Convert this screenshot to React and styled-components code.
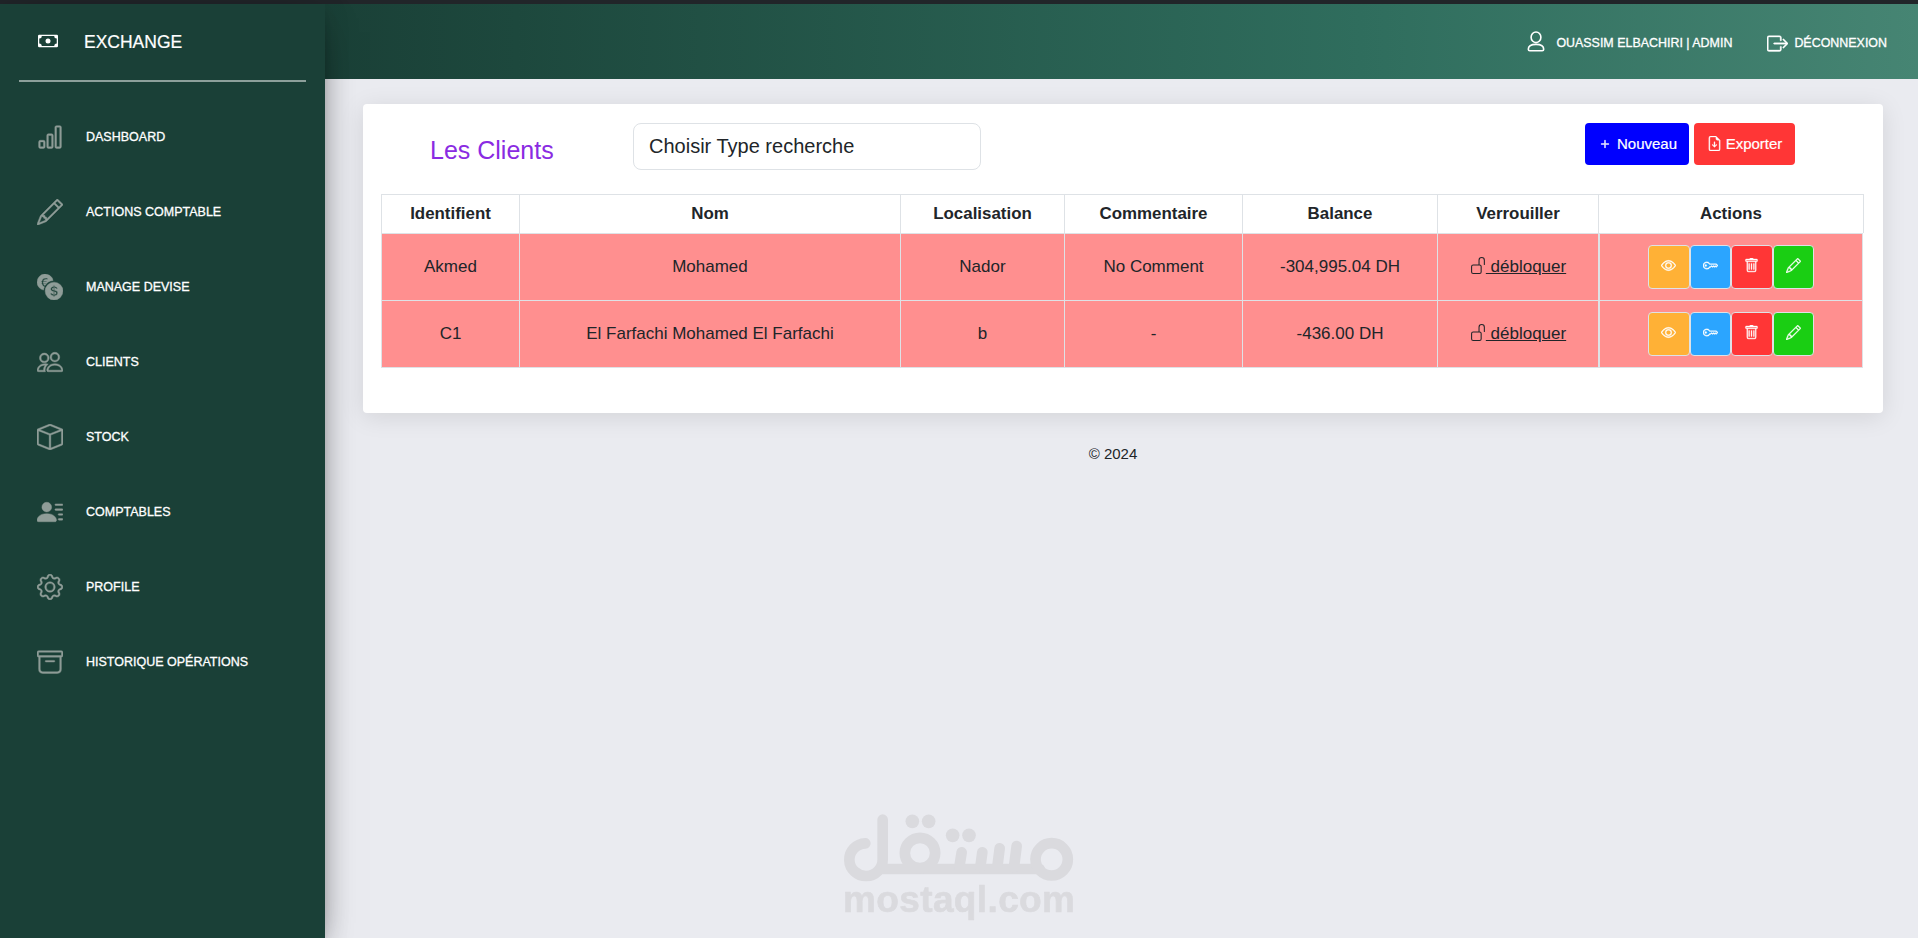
import React from 'react';
import styled, { createGlobalStyle } from 'styled-components';
import {
  BsArchive,
  BsBarChart,
  BsBox,
  BsBoxArrowRight,
  BsCash,
  BsCurrencyExchange,
  BsEye,
  BsFileEarmarkArrowDown,
  BsGear,
  BsKey,
  BsPencil,
  BsPeople,
  BsPersonLinesFill,
  BsPlus,
  BsTrash,
  BsUnlock,
} from 'react-icons/bs';

const GlobalStyle = createGlobalStyle`
  * {
    box-sizing: border-box;
  }

  body {
    margin: 0;
    background-color: #eaebf0;
    color: #212529;
    font-family: "Liberation Sans", Arial, sans-serif;
    overflow: hidden;
  }
`;

const Page = styled.div`
  display: flex;
  height: 100vh;
  border-top: 4px solid #212529;
`;

const Sidebar = styled.aside`
  position: relative;
  z-index: 2;
  width: 325px;
  flex-shrink: 0;
  background-color: #1a4037;
  color: #fff;
  box-shadow: 0 16px 38px -12px rgba(0, 0, 0, 0.56), 0 4px 25px 0 rgba(0, 0, 0, 0.12),
    0 8px 10px -5px rgba(0, 0, 0, 0.2);
`;

const Brand = styled.div`
  display: flex;
  align-items: center;
  gap: 26px;
  height: 78px;
  margin: 0 19px;
  padding: 0 0 2px 19px;
  border-bottom: 2px solid rgba(255, 255, 255, 0.5);
  font-size: 17.5px;

  span {
    padding-top: 2px;
    -webkit-text-stroke: 0.2px #fff;
  }
`;

const NavList = styled.ul`
  list-style: none;
  margin: 0;
  padding: 17px 0 0;
`;

const NavItem = styled.li`
  display: flex;
  align-items: center;
  gap: 23px;
  height: 75px;
  padding-left: 37px;
  font-size: 12.5px;
  text-transform: uppercase;
  -webkit-text-stroke: 0.3px #fff;

  svg {
    width: 26px;
    height: 26px;
    color: #8f9d98;
    stroke-width: 0.25px;
  }
`;

const NavLabel = styled.span`
  padding-top: 1px;
`;

const Main = styled.main`
  flex: 1;
  display: flex;
  flex-direction: column;
`;

const Header = styled.header`
  display: flex;
  justify-content: flex-end;
  align-items: center;
  height: 75px;
  padding: 0 31px 0 0;
  background: linear-gradient(to right, #1a4037, #1d483d 12%, #2f6d5d 65%, #468573);
  color: #fff;
  font-size: 12.45px;
  text-transform: uppercase;
  -webkit-text-stroke: 0.3px #fff;
`;

const HeaderLink = styled.span`
  display: flex;
  align-items: center;
  gap: ${(props) => props.$gap}px;
  margin-left: 35px;

  svg {
    margin-top: ${(props) => props.$drop}px;
    stroke-width: ${(props) => props.$stroke}px;
  }
`;

const HeaderLabel = styled.span`
  padding-top: 2px;
`;

const Card = styled.section`
  height: 309px;
  margin: 25px 35px 0 38px;
  padding: 19px 19px 0 18px;
  background-color: #fff;
  border-radius: 4px;
  box-shadow: 0 4px 25px rgba(0, 0, 0, 0.1);
`;

const Toolbar = styled.div`
  display: flex;
  align-items: flex-start;
  height: 71px;
  padding: 0 69px 0 49px;
`;

const Title = styled.h2`
  width: 203px;
  margin: 12px 0 0;
  color: #8a2be2;
  font-size: 25px;
  font-weight: normal;
  line-height: 30px;
`;

const SearchType = styled.div`
  width: 348px;
  height: 47px;
  margin-right: auto;
  padding: 0 15px;
  border: 1px solid #dee2e6;
  border-radius: 8px;
  font-size: 20px;
  line-height: 45px;
`;

const ToolButton = styled.button`
  display: flex;
  align-items: center;
  justify-content: center;
  gap: ${(props) => props.$gap}px;
  width: ${(props) => props.$width}px;
  height: 42px;
  margin-left: 5px;
  padding: 0 0 1px;
  border: none;
  border-radius: 4px;
  background-color: ${(props) => props.$color};
  color: #fff;
  font-family: inherit;
  font-size: 15px;
  -webkit-text-stroke: 0.2px #fff;

  svg {
    stroke-width: 0.4px;
  }
`;

const Table = styled.table`
  display: block;
  font-size: 17px;
  text-align: center;

  thead,
  tbody {
    display: block;
  }
`;

const Row = styled.tr`
  display: grid;
  grid-template-columns: 138px 381px 164px 178px 195px 161px 1fr;
`;

const HeadCell = styled.th`
  height: 39px;
  padding: 0;
  border: solid #dee2e6;
  border-width: 1px 0 0 1px;
  font-size: 16.9px;
  line-height: 38px;

  &:last-child {
    border-right-width: 1px;
  }
`;

const Cell = styled.td`
  display: flex;
  align-items: center;
  justify-content: center;
  height: 67px;
  padding: 0;
  border: solid #dee2e6;
  border-width: 1px 0 0 1px;
  background-color: #ff8f8f;

  tr:last-child > & {
    height: 68px;
    border-bottom-width: 1px;
  }
`;

const ActionsCell = styled(Cell)`
  margin-right: 1px;
  border-left-width: 2px;
  border-right-width: 1px;
`;

const Unlock = styled.a`
  display: flex;
  align-items: center;

  svg {
    margin: -3px -1px 0 0;
  }

  span {
    text-decoration: underline;
    white-space: pre;
  }
`;

const ActionButton = styled.button`
  display: flex;
  align-items: center;
  justify-content: center;
  width: 41.5px;
  height: 44px;
  padding: 0 0 3px;
  border: 1px solid #dee2e6;
  border-radius: 4px;
  background-color: ${(props) => props.$color};
  color: #fff;

  svg {
    flex-shrink: 0;
    stroke-width: 0.35px;
  }
`;

const Footer = styled.footer`
  padding: 32px 17px 0 0;
  font-size: 15px;
  line-height: 18px;
  text-align: center;
`;

// Sits over the page, like a stamp
const Watermark = styled.svg`
  position: fixed;
  left: 843px;
  top: 811px;
  z-index: 3;
  width: 233px;
  height: 110px;
  color: #dadade;
`;

const navItems = [
  { label: 'Dashboard', Icon: BsBarChart },
  { label: 'Actions comptable', Icon: BsPencil },
  { label: 'Manage devise', Icon: BsCurrencyExchange },
  { label: 'Clients', Icon: BsPeople },
  { label: 'Stock', Icon: BsBox },
  { label: 'Comptables', Icon: BsPersonLinesFill },
  { label: 'Profile', Icon: BsGear },
  { label: 'Historique opérations', Icon: BsArchive },
];

const columns = ['Identifient', 'Nom', 'Localisation', 'Commentaire', 'Balance', 'Verrouiller', 'Actions'];

const clients = [
  { id: 'Akmed', nom: 'Mohamed', ville: 'Nador', commentaire: 'No Comment', balance: '-304,995.04 DH' },
  { id: 'C1', nom: 'El Farfachi Mohamed El Farfachi', ville: 'b', commentaire: '-', balance: '-436.00 DH' },
];

const actions = [
  { name: 'voir', color: '#ffb136', Icon: BsEye },
  { name: 'clé', color: '#2ba5ff', Icon: BsKey },
  { name: 'supprimer', color: '#ff3636', Icon: BsTrash },
  { name: 'modifier', color: '#1ace13', Icon: BsPencil },
];

const UserIcon = () => (
  <svg width="18" height="21" viewBox="0 0 18 21" fill="none" stroke="currentColor">
    <ellipse cx="9" cy="6.3" rx="4.9" ry="5.3" />
    <path d="M1.3 18.2C1.3 15 4.8 13.4 9 13.4s7.7 1.6 7.7 4.8c0 1-.5 1.6-1.5 1.6H2.8c-1 0-1.5-.6-1.5-1.6z" />
  </svg>
);

const MostaqlLogo = () => (
  <Watermark viewBox="70 60 699 330">
    <g fill="none" stroke="currentColor" strokeWidth="32" strokeLinecap="round">
      <path d="M137 157A50 49 0 1 0 189 205V86" />
      <path d="M189 234H660" />
      <circle cx="301" cy="186" r="45.5" />
      <circle cx="696" cy="205" r="48.5" />
      <path d="M426 184L419 228M488 184L482 228M540 172L533 228M591 165L583 228" />
    </g>
    <g fill="currentColor">
      <circle cx="278" cy="91" r="20.5" />
      <circle cx="327" cy="91" r="20.5" />
      <circle cx="399" cy="133" r="20.5" />
      <circle cx="448" cy="133" r="20.5" />
      <text
        x="70"
        y="362"
        fontFamily="Liberation Sans, Arial, sans-serif"
        fontSize="111"
        fontWeight="bold"
        textLength="696"
        stroke="currentColor"
        strokeWidth="2"
        strokeLinejoin="round"
      >
        mostaql.com
      </text>
    </g>
  </Watermark>
);

const App = () => {
  return (
    <>
      <GlobalStyle />
      <Page>
        <Sidebar>
          <Brand>
            <BsCash size={20} />
            <span>EXCHANGE</span>
          </Brand>
          <NavList>
            {navItems.map(({ label, Icon }) => (
              <NavItem key={label}>
                <Icon />
                <NavLabel>{label}</NavLabel>
              </NavItem>
            ))}
          </NavList>
        </Sidebar>
        <Main>
          <Header>
            <HeaderLink $gap={11} $stroke={1.6} $drop={0}>
              <UserIcon />
              <HeaderLabel>Ouassim Elbachiri | Admin</HeaderLabel>
            </HeaderLink>
            <HeaderLink $gap={6} $stroke={0.3} $drop={4}>
              <BsBoxArrowRight size={21} />
              <HeaderLabel>Déconnexion</HeaderLabel>
            </HeaderLink>
          </Header>
          <Card>
            <Toolbar>
              <Title>Les Clients</Title>
              <SearchType>Choisir Type recherche</SearchType>
              <ToolButton $color="#0000ff" $width={104} $gap={4}>
                <BsPlus size={16} /> Nouveau
              </ToolButton>
              <ToolButton $color="#ff3636" $width={101} $gap={4}>
                <BsFileEarmarkArrowDown size={15} /> Exporter
              </ToolButton>
            </Toolbar>
            <Table>
              <thead>
                <Row>
                  {columns.map((column) => (
                    <HeadCell key={column}>{column}</HeadCell>
                  ))}
                </Row>
              </thead>
              <tbody>
                {clients.map((client) => (
                  <Row key={client.id}>
                    <Cell>{client.id}</Cell>
                    <Cell>{client.nom}</Cell>
                    <Cell>{client.ville}</Cell>
                    <Cell>{client.commentaire}</Cell>
                    <Cell>{client.balance}</Cell>
                    <Cell>
                      <Unlock>
                        <BsUnlock size={17} />
                        <span> débloquer</span>
                      </Unlock>
                    </Cell>
                    <ActionsCell>
                      {actions.map(({ name, color, Icon }) => (
                        <ActionButton key={name} $color={color} aria-label={name}>
                          <Icon size={15} />
                        </ActionButton>
                      ))}
                    </ActionsCell>
                  </Row>
                ))}
              </tbody>
            </Table>
          </Card>
          <Footer>© 2024</Footer>
        </Main>
      </Page>
      <MostaqlLogo />
    </>
  );
};

export default App;
